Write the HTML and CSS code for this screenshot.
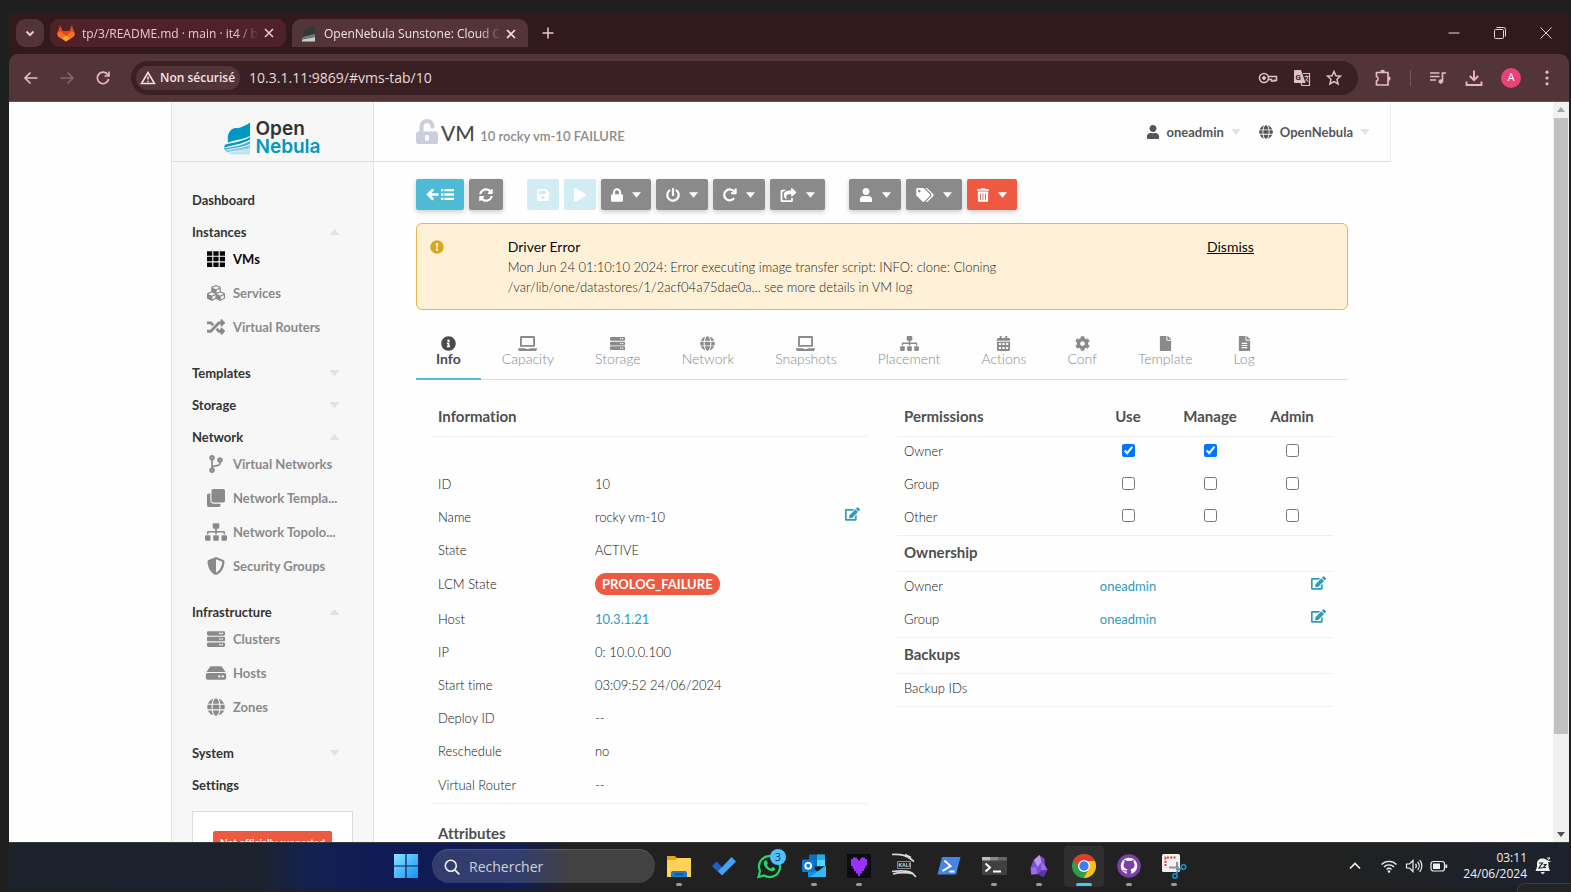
FILE: index.html
```html
<!DOCTYPE html>
<html lang="en">
<head>
<meta charset="utf-8">
<title>OpenNebula Sunstone: Cloud Operations Center</title>
<link rel="stylesheet" href="styles.css">
</head>
<body>
<svg class="sprite" aria-hidden="true">
  <symbol id="caret-down" viewBox="0 0 10 6"><path d="M0 0h10L5 6z"/></symbol>
  <symbol id="caret-up" viewBox="0 0 10 6"><path d="M0 6h10L5 0z"/></symbol>
  <symbol id="th" viewBox="0 0 512 512"><path d="M0 32h149v128H0zM181 32h149v128H181zM363 32h149v128H363zM0 192h149v128H0zM181 192h149v128H181zM363 192h149v128H363zM0 352h149v128H0zM181 352h149v128H181zM363 352h149v128H363z"/></symbol>
  <symbol id="cubes" viewBox="0 0 512 512"><path d="M488.6 250.2L392 214V105.5c0-15-9.3-28.4-23.4-33.7l-100-37.5c-8.1-3.1-17.1-3.1-25.3 0l-100 37.5c-14.1 5.3-23.4 18.7-23.4 33.7V214l-96.6 36.2C9.3 255.5 0 268.9 0 283.9V394c0 13.6 7.7 26.1 19.9 32.2l100 50c10.1 5.1 22.1 5.1 32.2 0l103.9-52 103.9 52c10.1 5.1 22.1 5.1 32.2 0l100-50c12.2-6.1 19.9-18.6 19.9-32.2V283.9c0-15-9.3-28.4-23.4-33.7zM358 214.8l-85 31.9v-68.2l85-37v73.3zM154 104.1l102-38.2 102 38.2v.6l-102 41.4-102-41.4v-.6zm84 291.1l-85 42.5v-79.1l85-38.8v75.4zm0-112l-102 41.4-102-41.4v-.6l102-38.2 102 38.2v.6zm240 112l-85 42.5v-79.1l85-38.8v75.4zm0-112l-102 41.4-102-41.4v-.6l102-38.2 102 38.2v.6z"/></symbol>
  <symbol id="random" viewBox="0 0 512 512"><path d="M504.971 359.029c9.373 9.373 9.373 24.569 0 33.941l-80 79.984c-15.01 15.01-40.971 4.49-40.971-16.971V416h-58.785a12.004 12.004 0 0 1-8.773-3.812l-70.556-75.596 53.333-57.143L352 336h32v-39.981c0-21.438 25.943-31.998 40.971-16.971l80 79.981zM12 176h84l52.781 56.551 53.333-57.143-70.556-75.596A11.999 11.999 0 0 0 122.785 96H12c-6.627 0-12 5.373-12 12v56c0 6.627 5.373 12 12 12zm372 0v39.984c0 21.46 25.961 31.98 40.971 16.971l80-79.984c9.373-9.373 9.373-24.569 0-33.941l-80-79.981C409.943 24.021 384 34.582 384 56.019V96h-58.785a12.004 12.004 0 0 0-8.773 3.812L96 336H12c-6.627 0-12 5.373-12 12v56c0 6.627 5.373 12 12 12h110.785c3.326 0 6.503-1.381 8.773-3.812L352 176h32z"/></symbol>
  <symbol id="branch" viewBox="0 0 384 512"><path d="M384 144c0-44.2-35.8-80-80-80s-80 35.8-80 80c0 36.4 24.3 67.1 57.5 76.8-.6 16.1-4.2 28.5-11 36.9-15.4 19.2-49.3 22.4-85.2 25.7-28.2 2.6-57.4 5.4-81.3 16.9v-144c32.5-10.2 56-40.5 56-76.3 0-44.2-35.8-80-80-80S0 35.8 0 80c0 35.8 23.5 66.1 56 76.3v199.3C23.5 365.9 0 396.2 0 432c0 44.2 35.8 80 80 80s80-35.8 80-80c0-34-21.2-63.1-51.2-74.6 3.1-5.2 7.8-9.8 14.9-13.4 16.2-8.2 40.4-10.4 66.1-12.8 42.2-3.9 90-8.4 118.2-43.4 14-17.4 21.1-39.8 21.6-67.9 31.6-10.8 54.4-40.7 54.4-75.9zM80 64c8.8 0 16 7.2 16 16s-7.2 16-16 16-16-7.2-16-16 7.2-16 16-16zm0 384c-8.8 0-16-7.2-16-16s7.2-16 16-16 16 7.2 16 16-7.2 16-16 16zm224-320c8.8 0 16 7.2 16 16s-7.2 16-16 16-16-7.2-16-16 7.2-16 16-16z"/></symbol>
  <symbol id="clone" viewBox="0 0 512 512"><path d="M464 0c26.51 0 48 21.49 48 48v288c0 26.51-21.49 48-48 48H176c-26.51 0-48-21.49-48-48V48c0-26.51 21.49-48 48-48h288M176 416c-44.112 0-80-35.888-80-80V128H48c-26.51 0-48 21.49-48 48v288c0 26.51 21.49 48 48 48h288c26.51 0 48-21.49 48-48v-48H176z"/></symbol>
  <symbol id="sitemap" viewBox="0 0 640 512"><path d="M128 352H32c-17.67 0-32 14.33-32 32v96c0 17.67 14.33 32 32 32h96c17.67 0 32-14.33 32-32v-96c0-17.67-14.33-32-32-32zm-24-80h192v48h48v-48h192v48h48v-57.59c0-21.17-17.23-38.41-38.41-38.41H344v-64h40c17.67 0 32-14.33 32-32V32c0-17.67-14.33-32-32-32H256c-17.67 0-32 14.33-32 32v96c0 17.67 14.33 32 32 32h40v64H94.41C73.23 224 56 241.23 56 262.41V320h48v-48zm264 80h-96c-17.67 0-32 14.33-32 32v96c0 17.67 14.33 32 32 32h96c17.67 0 32-14.33 32-32v-96c0-17.67-14.33-32-32-32zm240 0h-96c-17.67 0-32 14.33-32 32v96c0 17.67 14.33 32 32 32h96c17.67 0 32-14.33 32-32v-96c0-17.67-14.33-32-32-32z"/></symbol>
  <symbol id="shield" viewBox="0 0 512 512"><path d="M466.5 83.7l-192-80a48.15 48.15 0 0 0-36.9 0l-192 80C27.7 91.1 16 108.6 16 128c0 198.5 114.5 335.7 221.5 380.3 11.8 4.9 25.1 4.9 36.9 0C360.1 472.6 496 349.3 496 128c0-19.4-11.7-36.9-29.5-44.3zM256.1 446.3l-.1-381 175.9 73.3c-3.3 151.4-82.1 261.1-175.8 307.7z"/></symbol>
  <symbol id="server" viewBox="0 0 512 512"><path fill-rule="evenodd" d="M32 32h448a32 32 0 0 1 32 32v64a32 32 0 0 1-32 32H32a32 32 0 0 1-32-32V64a32 32 0 0 1 32-32zm376 64a24 24 0 1 0 48 0 24 24 0 1 0-48 0zm-64 0a24 24 0 1 0 48 0 24 24 0 1 0-48 0zM32 192h448a32 32 0 0 1 32 32v64a32 32 0 0 1-32 32H32a32 32 0 0 1-32-32v-64a32 32 0 0 1 32-32zm376 64a24 24 0 1 0 48 0 24 24 0 1 0-48 0zm-64 0a24 24 0 1 0 48 0 24 24 0 1 0-48 0zM32 352h448a32 32 0 0 1 32 32v64a32 32 0 0 1-32 32H32a32 32 0 0 1-32-32v-64a32 32 0 0 1 32-32zm376 64a24 24 0 1 0 48 0 24 24 0 1 0-48 0zm-64 0a24 24 0 1 0 48 0 24 24 0 1 0-48 0z"/></symbol>
  <symbol id="hdd" viewBox="0 0 576 512"><path d="M576 304v96c0 26.51-21.49 48-48 48H48c-26.51 0-48-21.49-48-48v-96c0-26.51 21.49-48 48-48h480c26.51 0 48 21.49 48 48zm-48-80a79.557 79.557 0 0 1 30.777 6.165L462.25 85.374A48.003 48.003 0 0 0 422.311 64H153.689a48 48 0 0 0-39.938 21.374L17.223 230.165A79.557 79.557 0 0 1 48 224h480zm-48 96c-17.673 0-32 14.327-32 32s14.327 32 32 32 32-14.327 32-32-14.327-32-32-32zm-96 0c-17.673 0-32 14.327-32 32s14.327 32 32 32 32-14.327 32-32-14.327-32-32-32z"/></symbol>
  <symbol id="globe" viewBox="0 0 496 512"><path d="M336.5 160C322 70.7 287.8 8 248 8s-74 62.7-88.5 152h177zM152 256c0 22.2 1.2 43.5 3.3 64h185.3c2.1-20.5 3.3-41.8 3.3-64s-1.2-43.5-3.3-64H155.3c-2.1 20.5-3.3 41.8-3.3 64zm324.7-96c-28.6-67.9-86.5-120.4-158-141.6 24.4 33.8 41.2 84.7 50 141.6h108zM177.2 18.4C105.8 39.6 47.8 92.1 19.3 160h108c8.7-56.9 25.5-107.8 49.9-141.6zM487.4 192H372.7c2.1 21 3.3 42.5 3.3 64s-1.2 43-3.3 64h114.6c5.5-20.5 8.6-41.8 8.6-64s-3.1-43.5-8.5-64zM120 256c0-21.5 1.2-43 3.3-64H8.6C3.2 212.5 0 233.8 0 256s3.2 43.5 8.6 64h114.6c-2-21-3.2-42.5-3.2-64zm39.5 96c14.5 89.3 48.7 152 88.5 152s74-62.7 88.5-152h-177zm159.3 141.6c71.4-21.2 129.4-73.7 158-141.6h-108c-8.8 56.9-25.6 107.8-50 141.6zM19.3 352c28.6 67.9 86.5 120.4 158 141.6-24.4-33.8-41.2-84.7-50-141.6h-108z"/></symbol>
  <symbol id="user" viewBox="0 0 448 512"><path d="M224 256c70.7 0 128-57.3 128-128S294.7 0 224 0 96 57.3 96 128s57.3 128 128 128zm89.6 32h-16.7c-22.2 10.2-46.9 16-72.9 16s-50.6-5.8-72.9-16h-16.7C60.2 288 0 348.2 0 422.4V464c0 26.5 21.5 48 48 48h352c26.5 0 48-21.5 48-48v-41.6c0-74.2-60.2-134.4-134.4-134.4z"/></symbol>
  <symbol id="unlock" viewBox="0 0 448 512"><path d="M400 256H152V152.9c0-39.6 31.7-72.5 71.3-72.9 40-.4 72.7 32.1 72.7 72v16c0 13.3 10.7 24 24 24h32c13.3 0 24-10.7 24-24v-16C376 68 307.5-.3 223.5 0 139.5.3 72 69.5 72 153.5V256H48c-26.5 0-48 21.5-48 48v160c0 26.5 21.5 48 48 48h352c26.5 0 48-21.5 48-48V304c0-26.5-21.5-48-48-48zM264 408c0 22.1-17.9 40-40 40s-40-17.9-40-40v-48c0-22.1 17.9-40 40-40s40 17.9 40 40v48z"/></symbol>
  <symbol id="lock" viewBox="0 0 448 512"><path d="M400 224h-24v-72C376 68.2 307.8 0 224 0S72 68.2 72 152v72H48c-26.5 0-48 21.5-48 48v192c0 26.5 21.5 48 48 48h352c26.5 0 48-21.5 48-48V272c0-26.5-21.5-48-48-48zm-104 0H152v-72c0-39.7 32.3-72 72-72s72 32.3 72 72v72z"/></symbol>
  <symbol id="back-list" viewBox="0 0 960 512"><path d="M430 210v92H185l95 96-64 64L10 256 216 50l64 64-95 96zM512 64h84v84h-84zM512 214h84v84h-84zM512 364h84v84h-84zM628 66h332v80H628zM628 216h332v80H628zM628 366h332v80H628z"/></symbol>
  <symbol id="sync" viewBox="0 0 512 512"><path d="M370.72 133.28C339.458 104.008 298.888 87.962 255.848 88c-77.458.068-144.328 53.178-162.791 126.85-1.344 5.363-6.122 9.15-11.651 9.15H24.103c-7.498 0-13.194-6.807-11.807-14.176C33.933 94.924 134.813 8 256 8c66.448 0 126.791 26.136 171.315 68.685L463.03 40.97C478.149 25.851 504 36.559 504 57.941V192c0 13.255-10.745 24-24 24H345.941c-21.382 0-32.09-25.851-16.971-40.971l41.75-41.749zM32 296h134.059c21.382 0 32.09 25.851 16.971 40.971l-41.75 41.75c31.262 29.273 71.835 45.319 114.876 45.28 77.418-.07 144.315-53.144 162.787-126.849 1.344-5.363 6.122-9.15 11.651-9.15h57.304c7.498 0 13.194 6.807 11.807 14.176C478.067 417.076 377.187 504 256 504c-66.448 0-126.791-26.136-171.315-68.685L48.97 471.03C33.851 486.149 8 475.441 8 454.059V320c0-13.255 10.745-24 24-24z"/></symbol>
  <symbol id="save" viewBox="0 0 448 512"><path d="M433.941 129.941l-83.882-83.882A48 48 0 0 0 316.118 32H48C21.49 32 0 53.49 0 80v352c0 26.51 21.49 48 48 48h352c26.51 0 48-21.49 48-48V163.882a48 48 0 0 0-14.059-33.941zM224 416c-35.346 0-64-28.654-64-64 0-35.346 28.654-64 64-64s64 28.654 64 64c0 35.346-28.654 64-64 64zm96-304.52V212c0 6.627-5.373 12-12 12H76c-6.627 0-12-5.373-12-12V108c0-6.627 5.373-12 12-12h228.52c3.183 0 6.235 1.264 8.485 3.515l3.48 3.48A11.996 11.996 0 0 1 320 111.48z"/></symbol>
  <symbol id="play" viewBox="0 0 448 512"><path d="M424.4 214.7L72.4 6.6C43.8-10.3 0 6.1 0 47.9V464c0 37.5 40.7 60.1 72.4 41.3l352-208c31.4-18.5 31.5-64.1 0-82.6z"/></symbol>
  <symbol id="power" viewBox="0 0 512 512"><path d="M400 54.1c63 45 104 118.6 104 201.9 0 136.8-110.8 247.7-247.5 248C120 504.3 8.2 393 8 256.4 7.9 173.1 48.9 99.3 111.8 54.2c11.7-8.3 28-4.8 35 7.7L162.6 90c5.9 10.5 3.1 23.8-6.6 31-41.5 30.8-68 79.6-68 134.9-.1 92.3 74.5 168.1 168 168.1 91.6 0 168.6-74.2 168-169.1-.3-51.8-24.7-101.8-68.1-134-9.7-7.2-12.4-20.5-6.5-30.9l15.8-28.1c7-12.4 23.2-16.1 34.8-7.8zM296 264V24c0-13.3-10.7-24-24-24h-32c-13.3 0-24 10.7-24 24v240c0 13.3 10.7 24 24 24h32c13.3 0 24-10.7 24-24z"/></symbol>
  <symbol id="redo" viewBox="0 0 512 512"><path fill="none" stroke="currentColor" stroke-width="80" d="M406 370A200 200 0 1 1 418 150"/><path d="M500 20v192a14 14 0 0 1-14 14H294v-74h130V20z"/></symbol>
  <symbol id="share" viewBox="0 0 576 512"><path d="M568 177L424 313c-15 14-40 3-40-18v-79c-144 2-205 36-164 168 5 15-13 26-26 17-40-29-76-84-76-140 0-138 115-168 266-169V24c0-21 25-32 40-18l144 136c10 10 10 26 0 35zM384 379v69H64V128h50c5 0 9-2 12-5 16-17 34-30 54-40 9-6 5-19-4-19H48C22 64 0 86 0 112v352c0 26 22 48 48 48h352c26 0 48-22 48-48v-88c0-8-8-13-15-10-11 3-22 4-33 2-9-1-16 3-16 11z"/></symbol>
  <symbol id="tags" viewBox="0 0 640 512"><path d="M497.941 225.941L286.059 14.059A48 48 0 0 0 252.118 0H48C21.49 0 0 21.49 0 48v204.118a48 48 0 0 0 14.059 33.941l211.882 211.882c18.744 18.745 49.136 18.746 67.882 0l204.118-204.118c18.745-18.745 18.745-49.137 0-67.882zM112 160c-26.51 0-48-21.49-48-48s21.49-48 48-48 48 21.49 48 48-21.49 48-48 48zm513.941 133.823L421.823 497.941c-18.745 18.745-49.137 18.745-67.882 0l-.36-.36L527.64 323.522c16.999-16.999 26.362-39.6 26.362-63.64s-9.362-46.641-26.362-63.64L331.397 0h48.721a48 48 0 0 1 33.941 14.059l211.882 211.882c18.745 18.745 18.745 49.137 0 67.882z"/></symbol>
  <symbol id="trash" viewBox="0 0 448 512"><path d="M32 464a48 48 0 0 0 48 48h288a48 48 0 0 0 48-48V128H32zm272-256a16 16 0 0 1 32 0v224a16 16 0 0 1-32 0zm-96 0a16 16 0 0 1 32 0v224a16 16 0 0 1-32 0zm-96 0a16 16 0 0 1 32 0v224a16 16 0 0 1-32 0zM432 32H312l-9.4-18.7A24 24 0 0 0 281.1 0H166.8a23.72 23.72 0 0 0-21.4 13.3L136 32H16A16 16 0 0 0 0 48v32a16 16 0 0 0 16 16h416a16 16 0 0 0 16-16V48a16 16 0 0 0-16-16z"/></symbol>
  <symbol id="warn" viewBox="0 0 512 512"><path fill-rule="evenodd" d="M256 8a248 248 0 1 1 0 496 248 248 0 1 1 0-496zm0 298a46 46 0 1 0 0 92 46 46 0 1 0 0-92zm-44-186l8 148c0 6 6 12 12 12h48c6 0 12-6 12-12l8-148c0-7-5-12-12-12h-64c-7 0-12 5-12 12z"/></symbol>
  <symbol id="info" viewBox="0 0 512 512"><path d="M256 8C119.043 8 8 119.083 8 256c0 136.997 111.043 248 248 248s248-111.003 248-248C504 119.083 392.957 8 256 8zm0 110c23.196 0 42 18.804 42 42s-18.804 42-42 42-42-18.804-42-42 18.804-42 42-42zm56 254c0 6.627-5.373 12-12 12h-88c-6.627 0-12-5.373-12-12v-24c0-6.627 5.373-12 12-12h12v-64h-12c-6.627 0-12-5.373-12-12v-24c0-6.627 5.373-12 12-12h64c6.627 0 12 5.373 12 12v100h12c6.627 0 12 5.373 12 12v24z"/></symbol>
  <symbol id="laptop" viewBox="0 0 640 512"><path fill-rule="evenodd" d="M112 0h416c26 0 48 22 48 48v320H64V48c0-26 22-48 48-48zm16 64v240h384V64zM0 416h250c2 20 14 30 32 30h76c18 0 30-10 32-30h250v32c0 35-29 64-64 64H64c-35 0-64-29-64-64z"/></symbol>
  <symbol id="calendar" viewBox="0 0 448 512"><path fill-rule="evenodd" d="M96 0h64v64h128V0h64v64h48c26 0 48 22 48 48v48H0v-48c0-26 22-48 48-48h48zM0 192h448v272c0 26-22 48-48 48H48c-26 0-48-22-48-48zm64 50v66h76v-66zm122 0v66h76v-66zm122 0v66h76v-66zM64 376v66h76v-66zm122 0v66h76v-66zm122 0v66h76v-66z"/></symbol>
  <symbol id="cog" viewBox="0 0 512 512"><path d="M487.4 315.7l-42.6-24.6c4.3-23.2 4.3-47 0-70.2l42.6-24.6c4.9-2.8 7.1-8.6 5.5-14-11.1-35.6-30-67.8-54.7-94.6-3.8-4.1-10-5.1-14.8-2.3L380.8 110c-17.9-15.4-38.5-27.3-60.8-35.1V25.8c0-5.6-3.9-10.5-9.4-11.7-36.7-8.2-74.3-7.8-109.2 0-5.5 1.2-9.4 6.1-9.4 11.7V75c-22.2 7.9-42.8 19.8-60.8 35.1L88.7 85.5c-4.9-2.8-11-1.9-14.8 2.3-24.7 26.7-43.6 58.9-54.7 94.6-1.7 5.4.6 11.2 5.5 14L67.3 221c-4.3 23.2-4.3 47 0 70.2l-42.6 24.6c-4.9 2.8-7.1 8.6-5.5 14 11.1 35.6 30 67.8 54.7 94.6 3.8 4.1 10 5.1 14.8 2.3l42.6-24.6c17.9 15.4 38.5 27.3 60.8 35.1v49.2c0 5.6 3.9 10.5 9.4 11.7 36.7 8.2 74.3 7.8 109.2 0 5.5-1.2 9.4-6.1 9.4-11.7v-49.2c22.2-7.9 42.8-19.8 60.8-35.1l42.6 24.6c4.9 2.8 11 1.9 14.8-2.3 24.7-26.7 43.6-58.9 54.7-94.6 1.5-5.5-.7-11.3-5.6-14.1zM256 336c-44.1 0-80-35.9-80-80s35.9-80 80-80 80 35.9 80 80-35.9 80-80 80z"/></symbol>
  <symbol id="file" viewBox="0 0 384 512"><path d="M224 136V0H24C10.7 0 0 10.7 0 24v464c0 13.3 10.7 24 24 24h336c13.3 0 24-10.7 24-24V160H248c-13.2 0-24-10.8-24-24zm160-14.1v6.1H256V0h6.1c6.4 0 12.5 2.5 17 7l97.9 98c4.5 4.5 7 10.6 7 16.9z"/></symbol>
  <symbol id="file-text" viewBox="0 0 384 512"><path fill-rule="evenodd" d="M224 136V0H24C10.7 0 0 10.7 0 24v464c0 13.3 10.7 24 24 24h336c13.3 0 24-10.7 24-24V160H248c-13.2 0-24-10.8-24-24zM96 232h192v40H96zm0 72h192v40H96zm0 72h192v40H96zM384 122v6H256V0h6c6 0 12 2 17 7l98 98c5 5 7 11 7 17z"/></symbol>
  <symbol id="edit" viewBox="0 0 576 512"><path d="M402.6 83.2l90.2 90.2c3.8 3.8 3.8 10 0 13.8L274.4 405.6l-92.8 10.3c-12.4 1.4-22.9-9.1-21.5-21.5l10.3-92.8L388.8 83.2c3.8-3.8 10-3.8 13.8 0zm162-22.9l-48.8-48.8c-15.2-15.2-39.9-15.2-55.2 0l-35.4 35.4c-3.8 3.8-3.8 10 0 13.8l90.2 90.2c3.8 3.8 10 3.8 13.8 0l35.4-35.4c15.2-15.3 15.2-40 0-55.2zM384 346.2V448H64V128h229.8c3.2 0 6.2-1.3 8.5-3.5l40-40c7.6-7.6 2.2-20.5-8.5-20.5H48C21.5 64 0 85.5 0 112v352c0 26.5 21.5 48 48 48h352c26.5 0 48-21.5 48-48V306.2c0-10.7-12.9-16-20.5-8.5l-40 40c-2.2 2.3-3.5 5.3-3.5 8.5z"/></symbol>
</svg>

<div class="browser">
  <div class="tabstrip">
    <button class="tab-search" aria-label="Search tabs"><svg viewBox="0 0 10 10" class="i10 line"><path d="M1.500 3.500L5 7l3.500-3.500" stroke-width="2"/></svg></button>
    <div class="btab">
      <svg class="i18" viewBox="0 0 18 18"><path fill="#e24329" d="M3.200 1L5.500 7h7L14.800 1l2.700 7.500L9 17 .5 8.500z"/><path fill="#fc6d26" d="M.5 8.500c-.8 2 0 3.700 1.500 4.700L9 17.500l7-4.300c1.500-1 2.300-2.700 1.500-4.700l-3-1.300L9 12 3.500 7.200z"/><path fill="#fca326" d="M5 14.300L9 11.500l4 2.800-4 3.200z"/></svg>
      <span class="btab-title">tp/3/README.md · main · it4 / b</span>
      <button class="close" aria-label="Close tab"><svg viewBox="0 0 10 10" class="i10 line"><path d="M1 1l8 8M9 1L1 9" stroke-width="1.600"/></svg></button>
    </div>
    <div class="btab active">
      <svg class="i18 fav" viewBox="0 0 18 18"><path fill="#2e3a38" d="M4 5l11-4v8L3 12z"/><path fill="#77807e" d="M3 12l12-3v2.500L2 14z"/><path fill="#c9cfcd" d="M2 14.500l13-2.500v4.500H2z"/></svg>
      <span class="btab-title">OpenNebula Sunstone: Cloud C</span>
      <button class="close" aria-label="Close tab"><svg viewBox="0 0 10 10" class="i10 line"><path d="M1 1l8 8M9 1L1 9" stroke-width="1.600"/></svg></button>
    </div>
    <button class="newtab" aria-label="New tab"><svg viewBox="0 0 12 12" class="i12 line"><path d="M6 .5v11M.5 6h11" stroke-width="1.500"/></svg></button>
    <div class="winctl">
      <button aria-label="Minimize"><svg viewBox="0 0 12 12" class="i12 line"><path d="M.5 6h11"/></svg></button>
      <button aria-label="Restore"><svg viewBox="0 0 12 12" class="i12 line"><rect x=".5" y="2.500" width="9" height="9" rx="1"/><path d="M2.500 .5H9.500a2 2 0 0 1 2 2v7"/></svg></button>
      <button aria-label="Close"><svg viewBox="0 0 12 12" class="i12 line"><path d="M.5 .5l11 11M11.500 .5l-11 11"/></svg></button>
    </div>
  </div>

  <div class="toolbar">
    <button aria-label="Back"><svg viewBox="0 0 16 16" class="i16 line"><path d="M14.500 8H2.500M7.500 2.500L2 8l5.500 5.500" stroke-width="1.700"/></svg></button>
    <button aria-label="Forward" class="dim"><svg viewBox="0 0 16 16" class="i16 line"><path d="M1.500 8h12M8.500 2.500L14 8l-5.500 5.500" stroke-width="1.700"/></svg></button>
    <button aria-label="Reload"><svg viewBox="0 0 16 16" class="i16 line"><path d="M12.800 4.800A5.700 5.700 0 1 0 13.600 9M14 1.500V6H9.500" stroke-width="1.700"/></svg></button>
    <div class="omnibox">
      <button class="chip"><svg viewBox="0 0 16 16" class="i16 line"><path d="M8 2.500L1.500 13.500h13z" stroke-width="1.500"/><path d="M8 6.500v3M8 10.800v1.400" stroke-width="1.500"/></svg>Non sécurisé</button>
      <input class="url" aria-label="Address" value="10.3.1.11:9869/#vms-tab/10">
      <button aria-label="Passwords"><svg viewBox="0 0 20 16" class="i20 line"><circle cx="6" cy="8" r="4.500" stroke-width="1.600"/><circle cx="6" cy="8" r="1.500" fill="currentColor"/><path d="M10 6.500h8.500v4h-2M10 9.500h3.500v1.500h3V9.500" stroke-width="1.500"/></svg></button>
      <button aria-label="Translate"><svg viewBox="0 0 18 18" class="i18"><path fill="#dcc3c6" d="M2 1h6l1.300 3.500L12.500 14H2a1 1 0 0 1-1-1V2a1 1 0 0 1 1-1z"/><path fill="none" stroke="#dcc3c6" stroke-width="1.200" d="M10 4.500h6.500v12H9L8 14"/><text x="2.500" y="10.500" class="glyph">G</text><path fill="none" stroke="#dcc3c6" d="M11.500 7.500h4M13.500 6.500v1M15 7.500c-.5 2.500-2 4-3 5M12.500 9.500l3 3.500"/></svg></button>
      <button aria-label="Bookmark"><svg viewBox="0 0 16 16" class="i16 line"><path d="M8 1.500l1.900 4.300 4.600.4-3.500 3.100 1.100 4.600L8 11.500l-4.100 2.400L5 9.300 1.500 6.200l4.600-.4z" stroke-width="1.500"/></svg></button>
    </div>
    <div class="actions">
      <button aria-label="Extensions"><svg viewBox="0 0 18 18" class="i18 line"><path d="M2.500 3.500h11.500v12.500H2.500v-4a2.400 2.400 0 0 0 0-4.500z" stroke-width="1.700"/><path d="M7 3.200a1.600 1.600 0 0 1 3.200 0M14.200 8a1.600 1.600 0 0 1 0 3.200" stroke-width="1.700" fill="currentColor"/></svg></button>
      <span class="sep"></span>
      <button aria-label="Media"><svg viewBox="0 0 18 18" class="i18 line"><path d="M1 4h9.500M1 7.500h9.500M1 11h6" stroke-width="1.700"/><path d="M13.500 12.500V4H17" stroke-width="1.700"/><circle cx="11.800" cy="12.500" r="1.800" fill="currentColor"/></svg></button>
      <button aria-label="Downloads"><svg viewBox="0 0 18 18" class="i18 line"><path d="M9 1.500v9.500M4.800 7L9 11.200 13.200 7M1.500 12.500v3.500h15v-3.500" stroke-width="1.900"/></svg></button>
      <button class="avatar" aria-label="Profile">A</button>
      <button aria-label="Menu"><svg viewBox="0 0 16 16" class="i16"><circle cx="8" cy="2.200" r="1.600"/><circle cx="8" cy="8" r="1.600"/><circle cx="8" cy="13.800" r="1.600"/></svg></button>
    </div>
  </div>

  <div class="viewport">
    <div class="scroller">
      <div class="app">
        <aside class="sidebar">
          <div class="logo">
            <svg viewBox="0 0 28 34" class="logo-mark"><path fill="#0098c3" d="M4 19C3 11 9 5 14 7c4-1 9-3 13-6v14C19 19 11 19 4 22z"/><path fill="#0098c3" d="M1 24c7-2 18-3 26-8v2.500C18 24 8 24 0 27z"/><path fill="#3bb0d3" d="M0 27.500C9 26 19 25 27 20v3c-8 4-18 4-26 6.500z"/><path fill="#7fcce3" d="M1 30c9-2 18-2 26-6v3.500c-8 2.500-17 2-24 4.500z"/><path fill="#c0e5f1" d="M4 32.500c8-2 15-2 23-4.500V34H7z"/></svg>
            <div class="logo-text"><span>Open</span><span class="blue">Nebula</span></div>
          </div>
          <nav class="nav">
            <div class="group"><a class="section" href="#dashboard">Dashboard</a></div>
            <div class="group open">
              <button class="section">Instances<svg class="caret"><use href="#caret-up"/></svg></button>
              <a class="sub current" href="#vms"><svg class="ni"><use href="#th"/></svg><span>VMs</span></a>
              <a class="sub" href="#services"><svg class="ni"><use href="#cubes"/></svg><span>Services</span></a>
              <a class="sub" href="#vrouters"><svg class="ni"><use href="#random"/></svg><span>Virtual Routers</span></a>
            </div>
            <div class="group"><button class="section">Templates<svg class="caret"><use href="#caret-down"/></svg></button></div>
            <div class="group"><button class="section">Storage<svg class="caret"><use href="#caret-down"/></svg></button></div>
            <div class="group open">
              <button class="section">Network<svg class="caret"><use href="#caret-up"/></svg></button>
              <a class="sub" href="#vnets"><svg class="ni"><use href="#branch"/></svg><span>Virtual Networks</span></a>
              <a class="sub" href="#vntemplates"><svg class="ni"><use href="#clone"/></svg><span>Network Templa...</span></a>
              <a class="sub" href="#topology"><svg class="ni wide"><use href="#sitemap"/></svg><span>Network Topolo...</span></a>
              <a class="sub" href="#secgroups"><svg class="ni"><use href="#shield"/></svg><span>Security Groups</span></a>
            </div>
            <div class="group open">
              <button class="section">Infrastructure<svg class="caret"><use href="#caret-up"/></svg></button>
              <a class="sub" href="#clusters"><svg class="ni"><use href="#server"/></svg><span>Clusters</span></a>
              <a class="sub" href="#hosts"><svg class="ni wide"><use href="#hdd"/></svg><span>Hosts</span></a>
              <a class="sub" href="#zones"><svg class="ni"><use href="#globe"/></svg><span>Zones</span></a>
            </div>
            <div class="group"><button class="section">System<svg class="caret"><use href="#caret-down"/></svg></button></div>
            <div class="group"><a class="section" href="#settings">Settings</a></div>
          </nav>
          <div class="support"><span class="support-tag">Not officially supported</span></div>
        </aside>

        <main class="main">
          <header class="head">
            <svg class="head-lock"><use href="#unlock"/></svg>
            <h1>VM <small>10 rocky vm-10 FAILURE</small></h1>
            <div class="head-menu">
              <button><svg class="i14"><use href="#user"/></svg>oneadmin<svg class="caret"><use href="#caret-down"/></svg></button>
              <button><svg class="i14"><use href="#globe"/></svg>OpenNebula<svg class="caret"><use href="#caret-down"/></svg></button>
            </div>
          </header>

          <div class="content">
            <div class="actionbar">
              <div class="bgroup">
                <button class="btn cyan" aria-label="Back to list"><svg class="ic-list"><use href="#back-list"/></svg></button>
                <button class="btn" aria-label="Refresh"><svg class="i14"><use href="#sync"/></svg></button>
              </div>
              <div class="bgroup">
                <button class="btn pale" disabled aria-label="Save"><svg class="i14 n"><use href="#save"/></svg></button>
                <button class="btn pale" disabled aria-label="Play"><svg class="i14 n"><use href="#play"/></svg></button>
                <button class="btn" aria-label="Lock"><svg class="i14 n"><use href="#lock"/></svg><svg class="bc"><use href="#caret-down"/></svg></button>
                <button class="btn" aria-label="Power"><svg class="i14"><use href="#power"/></svg><svg class="bc"><use href="#caret-down"/></svg></button>
                <button class="btn" aria-label="Reboot"><svg class="i14"><use href="#redo"/></svg><svg class="bc"><use href="#caret-down"/></svg></button>
                <button class="btn" aria-label="Migrate"><svg class="i14 w"><use href="#share"/></svg><svg class="bc"><use href="#caret-down"/></svg></button>
              </div>
              <div class="bgroup">
                <button class="btn" aria-label="Owner"><svg class="i14"><use href="#user"/></svg><svg class="bc"><use href="#caret-down"/></svg></button>
                <button class="btn" aria-label="Labels"><svg class="i14 ww"><use href="#tags"/></svg><svg class="bc"><use href="#caret-down"/></svg></button>
                <button class="btn red" aria-label="Terminate"><svg class="i14 n"><use href="#trash"/></svg><svg class="bc"><use href="#caret-down"/></svg></button>
              </div>
            </div>

            <div class="alert" role="alert">
              <svg class="i14 gold"><use href="#warn"/></svg>
              <p><b>Driver Error</b><br>Mon Jun 24 01:10:10 2024: Error executing image transfer script: INFO: clone: Cloning<br>/var/lib/one/datastores/1/2acf04a75dae0a... see more details in VM log</p>
              <a href="#dismiss">Dismiss</a>
            </div>

            <nav class="tabs">
              <a class="on" href="#info"><svg class="ti"><use href="#info"/></svg>Info</a>
              <a href="#capacity"><svg class="ti"><use href="#laptop"/></svg>Capacity</a>
              <a href="#storage"><svg class="ti"><use href="#server"/></svg>Storage</a>
              <a href="#network"><svg class="ti"><use href="#globe"/></svg>Network</a>
              <a href="#snapshots"><svg class="ti"><use href="#laptop"/></svg>Snapshots</a>
              <a href="#placement"><svg class="ti"><use href="#sitemap"/></svg>Placement</a>
              <a href="#actions"><svg class="ti"><use href="#calendar"/></svg>Actions</a>
              <a href="#conf"><svg class="ti"><use href="#cog"/></svg>Conf</a>
              <a href="#template"><svg class="ti"><use href="#file"/></svg>Template</a>
              <a href="#log"><svg class="ti"><use href="#file-text"/></svg>Log</a>
            </nav>

            <div class="panels">
              <div>
                <table class="info">
                  <colgroup><col class="col-key"><col><col class="col-edit"></colgroup>
                  <thead><tr><th colspan="3">Information</th></tr></thead>
                  <tbody>
                    <tr class="blank"><td colspan="3"></td></tr>
                    <tr><td>ID</td><td>10</td><td></td></tr>
                    <tr><td>Name</td><td>rocky vm-10</td><td class="e"><button aria-label="Edit name"><svg class="ed"><use href="#edit"/></svg></button></td></tr>
                    <tr><td>State</td><td>ACTIVE</td><td></td></tr>
                    <tr class="tall"><td>LCM State</td><td><span class="pill">PROLOG_FAILURE</span></td><td></td></tr>
                    <tr><td>Host</td><td><a href="#host">10.3.1.21</a></td><td></td></tr>
                    <tr><td>IP</td><td>0: 10.0.0.100</td><td></td></tr>
                    <tr><td>Start time</td><td>03:09:52 24/06/2024</td><td></td></tr>
                    <tr><td>Deploy ID</td><td>--</td><td></td></tr>
                    <tr><td>Reschedule</td><td>no</td><td></td></tr>
                    <tr class="tall"><td>Virtual Router</td><td>--</td><td></td></tr>
                  </tbody>
                </table>
                <table class="info attrs"><thead><tr><th>Attributes</th></tr></thead></table>
              </div>
              <div>
                <table class="perm">
                  <thead><tr><th>Permissions</th><th class="c">Use</th><th class="c">Manage</th><th class="c">Admin</th></tr></thead>
                  <tbody>
                    <tr><td>Owner</td><td class="c"><input type="checkbox" checked aria-label="Owner use"></td><td class="c"><input type="checkbox" checked aria-label="Owner manage"></td><td class="c"><input type="checkbox" aria-label="Owner admin"></td></tr>
                    <tr><td>Group</td><td class="c"><input type="checkbox" aria-label="Group use"></td><td class="c"><input type="checkbox" aria-label="Group manage"></td><td class="c"><input type="checkbox" aria-label="Group admin"></td></tr>
                    <tr><td>Other</td><td class="c"><input type="checkbox" aria-label="Other use"></td><td class="c"><input type="checkbox" aria-label="Other manage"></td><td class="c"><input type="checkbox" aria-label="Other admin"></td></tr>
                  </tbody>
                  <thead class="mid"><tr><th colspan="4">Ownership</th></tr></thead>
                  <tbody>
                    <tr><td>Owner</td><td class="c"><a href="#user">oneadmin</a></td><td></td><td class="e"><button aria-label="Edit owner"><svg class="ed"><use href="#edit"/></svg></button></td></tr>
                    <tr><td>Group</td><td class="c"><a href="#group">oneadmin</a></td><td></td><td class="e"><button aria-label="Edit group"><svg class="ed"><use href="#edit"/></svg></button></td></tr>
                  </tbody>
                  <thead class="mid"><tr><th colspan="4">Backups</th></tr></thead>
                  <tbody><tr><td colspan="4">Backup IDs</td></tr></tbody>
                </table>
              </div>
            </div>
          </div>
        </main>
      </div>
    </div>
    <div class="scrollbar">
      <svg class="arrow up"><use href="#caret-up"/></svg>
      <div class="track"><div class="thumb"></div></div>
      <svg class="arrow"><use href="#caret-down"/></svg>
    </div>
  </div>

  <div class="taskbar">
    <div class="dock">
      <button class="start" aria-label="Start"><svg viewBox="0 0 24 24" class="i24"><defs><linearGradient id="win" x1="0" y1="0" x2="1" y2="1"><stop offset="0" stop-color="#8fe3ff"/><stop offset="1" stop-color="#0a93f5"/></linearGradient></defs><path fill="url(#win)" d="M0 0h11.400v11.400H0zM12.600 0H24v11.400H12.600zM0 12.600h11.400V24H0zM12.600 12.600H24V24H12.600z"/></svg></button>
      <label class="search"><svg viewBox="0 0 16 16" class="i16 line"><circle cx="6.800" cy="6.800" r="5.500" stroke-width="1.600"/><path d="M10.800 10.800l4.500 4.500" stroke-width="1.800"/></svg><input placeholder="Rechercher" aria-label="Rechercher"></label>
      <div class="apps">
        <button class="run" aria-label="Explorer"><svg viewBox="0 0 26 26" class="i26"><path fill="#e8a317" d="M1 3h8l2.500 2.500H25V10H1z"/><path fill="#ffd157" d="M1 7h8l2.500-2H25v19H1z"/><path fill="#1c79c8" d="M5 24v-4a2 2 0 0 1 2-2h12a2 2 0 0 1 2 2v4z"/><path fill="#0b4f8f" d="M9 20.500h8v1.500H9z"/></svg></button>
        <button aria-label="To Do"><svg viewBox="0 0 26 26" class="i26"><path fill="#1f5fc4" d="M1 13l4.500-4.500 6 6-4.500 4.500z"/><path fill="#45a2f2" d="M7 18.500L20.500 4 25 8.500 11 22.500z"/></svg></button>
        <button aria-label="WhatsApp"><svg viewBox="0 0 26 26" class="i26"><path fill="none" stroke="#25d366" stroke-width="2.200" d="M2.500 24l1.500-6A10.500 10.500 0 1 1 8 22.500z"/><path fill="#25d366" d="M8.500 8c1-1.300 2-1 2.500.2l.8 1.800c.2.500-.9 1.500-.8 1.900.8 1.800 2.300 2.900 4 3.500.5.100 1.400-1.500 1.900-1.300l2.200 1.100c.6 2.300-1.700 3.300-3.300 3-4-.8-7.500-4-8-7.200-.1-1.200.2-2.300.7-3z"/></svg><span class="badge">3</span></button>
        <button class="run" aria-label="Outlook"><svg viewBox="0 0 26 26" class="i26"><path fill="#0f6cbd" d="M8 1.500h16v12H8z"/><path fill="#28a8ea" d="M16 1.500h8v6h-8z"/><path fill="#50d9ff" d="M16 7h8v6h-8z"/><path fill="#1490df" d="M7 12.500l9.500 6 8.500-6V24H7z"/><path fill="#35b8f1" d="M25 12.500V24H9z"/><rect x="1" y="6.500" width="12.500" height="12.500" rx="1" fill="#0f78d4"/><circle cx="7.200" cy="12.800" r="2.900" fill="none" stroke="#fff" stroke-width="1.900"/></svg></button>
        <button class="run" aria-label="Heart"><svg viewBox="0 0 26 26" class="i26"><path fill="#0d0b14" d="M1 1h24v24H1z"/><path fill="#9b30ff" d="M5 6h2V4.500h4V6h1v1.500h2V6h1V4.500h4V6h2v7h-1.500v2.500H18V18h-2v2.500h-2V23h-2v-2.500h-2V18H8v-2.500H6.500V13H5z"/></svg></button>
        <button aria-label="Kali"><svg viewBox="0 0 26 26" class="i26"><path fill="none" stroke="#d8d8d8" stroke-width="1.700" d="M1 1.500c7-.5 13 0 18 4l4 3M14 1.500l6 3M1 18.500c9-1 16-1 20 1.500l4 4M2 21c7-2 13-2 21 0"/><path fill="none" stroke="#8a8a8a" d="M6.500 8.500h13v7h-13z"/><text x="7.500" y="14" class="kali">KALI</text></svg></button>
        <button aria-label="PowerShell"><svg viewBox="0 0 26 26" class="i26"><path fill="#4a83e6" d="M6 4h18.500L20 21.500H1.500z"/><path fill="none" stroke="#fff" stroke-width="2" d="M8.500 7.500l6 5.500-8 5M13.500 18.500h5"/></svg></button>
        <button class="run" aria-label="Terminal"><svg viewBox="0 0 26 26" class="i26"><rect x="1" y="4" width="25" height="18" rx="1" fill="#404040"/><path fill="#bdbdbd" d="M1 4h8v3.500H1z"/><path fill="#8a8a8a" d="M9 4h8v3.500H9z"/><path fill="#666" d="M17 4h9v3.500h-9z"/><path fill="none" stroke="#fff" stroke-width="2" d="M4.500 10.500l4.500 4-4.500 4M12 18.500h8"/></svg></button>
        <button class="run" aria-label="Obsidian"><svg viewBox="0 0 26 26" class="i26"><path fill="#7c4fd0" d="M13.500 2l5 4 .5 6 2.500 4.500-4 7.500-6-3-6.500.5L4.500 15l3-8z"/><path fill="#b79bf3" d="M13.500 2L8 7l3.500 7 4-5z"/><path fill="#9a70e8" d="M5 15l5-1 1.500 7-6 .500zM15.500 9l3 3.500 2.500 4-6 1z"/><path fill="#5e32a8" d="M11.500 21l4-3.500 5.500-.5-3.500 7z"/></svg></button>
        <button class="run focus" aria-label="Chrome"><svg viewBox="0 0 26 26" class="i26"><circle cx="13" cy="13" r="12" fill="#2f9e44"/><path fill="#e33b2e" d="M2.600 7A12 12 0 0 1 23.400 7L24 8.500H13l-5 7z"/><path fill="#fbc116" d="M23.900 8A12 12 0 0 1 12.500 25l5.500-9 -.5-8z"/><circle cx="13" cy="13" r="6" fill="#fff"/><circle cx="13" cy="13" r="4.700" fill="#3b7ded"/></svg></button>
        <button class="run" aria-label="GitHub Desktop"><svg viewBox="0 0 26 26" class="i26"><circle cx="13" cy="13" r="11.800" fill="#7b3fa8"/><circle cx="13" cy="13" r="8.300" fill="#fff"/><path fill="#7b3fa8" d="M10.800 21.500v-3c-2.500.6-3-1.200-4-1.600 1.700-.5 2.400 1.300 4 .6.100-.7.400-1 .7-1.300-2.500-.4-4-1.400-4-4.200 0-1 .4-1.900 1-2.500-.2-.7-.2-1.600.1-2.500 1 0 1.900.6 2.400 1a8.500 8.500 0 0 1 4 0c.6-.4 1.500-1 2.500-1 .3.900.3 1.800.1 2.500.6.6 1 1.500 1 2.500 0 2.800-1.600 3.900-4.100 4.200.4.400.7 1 .7 1.900v3.400z"/></svg></button>
        <button class="run" aria-label="Snipping Tool"><svg viewBox="0 0 26 26" class="i26"><rect x="1" y="1" width="18" height="18" rx="1.500" fill="#f2f2f2"/><path fill="none" stroke="#d8402c" stroke-width="2" stroke-dasharray="2 1.300" d="M14.500 4.500H4.500v10"/><path stroke="#8b9299" stroke-width="2" d="M16 9v8M8 14.500h10"/><circle cx="22.500" cy="14" r="2.200" fill="none" stroke="#1c93d8" stroke-width="1.500"/><circle cx="14" cy="23" r="2.200" fill="none" stroke="#1c93d8" stroke-width="1.500"/><path stroke="#1c93d8" stroke-width="1.500" d="M15 21l2-4 3.500-2"/></svg></button>
      </div>
    </div>
    <div class="tray">
      <svg viewBox="0 0 14 14" class="i14 line"><path d="M2 9.500L7 4.500l5 5" stroke-width="1.700"/></svg>
      <svg viewBox="0 0 18 16" class="i18 line wifi"><path d="M1.500 6.500a10.500 10.500 0 0 1 15 0M4 9a7 7 0 0 1 10 0M6.500 11.500a3.600 3.600 0 0 1 5 0" stroke-width="1.400"/><circle cx="9" cy="13.500" r="1.300" fill="currentColor" stroke="none"/></svg>
      <svg viewBox="0 0 18 16" class="i18 line"><path d="M1.500 6v4h3l3.500 3.500V2.500L4.500 6zM10.500 5.800a3.500 3.500 0 0 1 0 4.400M12.600 4a6 6 0 0 1 0 8M14.700 2.200a9 9 0 0 1 0 11.600" stroke-width="1.200"/></svg>
      <svg viewBox="0 0 18 16" class="i18 line"><rect x="1" y="3.500" width="13.500" height="9.500" rx="2.500" stroke-width="1.200"/><path d="M3 5.500h7v5.500H3z" fill="currentColor" stroke="none"/><path d="M16.300 6.500v3.500" stroke-width="1.800"/></svg>
      <div class="clock"><time>03:11</time><time>24/06/2024</time></div>
      <svg viewBox="0 0 16 18" class="i18 bell"><path fill="#f0f0f0" d="M7.500 1.500C3.500 1.500 2 4 2 7v3L.5 14h14.500L13.500 10V7c0-3-2-5.500-6-5.500zM5.500 15h4.400l-2.200 2.500z"/><path fill="none" stroke="#202430" stroke-width="1.200" d="M4 6h3.500l-3.500 5h3.500M8.500 7.500h2.500l-2.500 3H11"/><path fill="none" stroke="#f0f0f0" d="M12 1h3l-3 3.500h3.500"/></svg>
    </div>
    <div class="corner"></div>
  </div>
</div>
</body>
</html>
```
FILE: styles.css
```css
* { box-sizing: border-box; }
body { margin: 0; background: #1f1f1f; font-family: Lato, "Liberation Sans", sans-serif; font-variant-ligatures: none; }
button { border: 0; background: none; padding: 0; margin: 0; font: inherit; color: inherit; display: flex; align-items: center; }
a { text-decoration: none; color: inherit; }
svg { fill: currentColor; flex: none; display: block; }
.sprite { position: absolute; width: 0; height: 0; }
.line { fill: none; stroke: currentColor; }
.i10 { width: 10px; height: 10px; }
.i12 { width: 12px; height: 12px; }
.i14 { width: 14px; height: 14px; }
.i16 { width: 16px; height: 16px; }
.i18 { width: 18px; height: 18px; }
.i20 { width: 20px; height: 16px; }
.i24 { width: 24px; height: 24px; }
.i26 { width: 26px; height: 26px; }

.browser { height: 100vh; padding: 13px 2px 3px 9px; display: flex; flex-direction: column; overflow: hidden; }

/* Browser tab strip */
.tabstrip { height: 41px; background: #31191c; display: flex; align-items: flex-start; padding: 6px 17px 0 7px; font: 12px "Open Sans", sans-serif; color: #e8c9cd; }
.tab-search { width: 28px; height: 28px; border-radius: 9px; background: #513338; justify-content: center; margin-right: 6px; }
.btab { width: 236px; height: 28px; border-radius: 9px; background: #4f2128; display: flex; align-items: center; padding: 0 12px 0 7px; gap: 7px; margin-right: 6px; }
.btab-title { flex: 1; min-width: 0; white-space: nowrap; mask-image: linear-gradient(90deg, #000 88%, transparent 101%); }
.btab.active { height: 35px; padding-bottom: 6px; background: #533438; border-radius: 9px 9px 0 0; color: #f3e3e5; padding-left: 8px; gap: 6px; }
.newtab { height: 28px; margin-left: 8px; }
.winctl { margin-left: auto; height: 28px; display: flex; gap: 34px; color: #e6d8da; }

/* Browser toolbar */
.toolbar { height: 48px; background: #533438; border-bottom: 1px solid #6e5155; border-radius: 9px 9px 0 0; display: flex; align-items: center; padding: 0 14px; gap: 20px; color: #e9b9c0; box-shadow: 0 -9px 0 -2px #31191c; }
.toolbar .dim { color: #85656a; }
.omnibox { flex: 1; height: 34px; border-radius: 17px; background: #3a2023; display: flex; align-items: center; padding: 0 16px 0 5px; gap: 15px; color: #dcc3c6; }
.chip { height: 24px; border-radius: 12px; background: #533438; padding: 0 5px 0 4px; gap: 4px; font: 600 12px "Open Sans", sans-serif; color: #f5e6e8; }
.url { flex: 1; min-width: 0; border: 0; background: none; padding: 0; margin-left: -6px; font: 14px "Open Sans", sans-serif; color: #e8d9db; }
.actions { display: flex; align-items: center; gap: 18px; margin-left: -4px; }
.sep { width: 1px; height: 16px; background: #7a4f56; }
.avatar { width: 20px; height: 20px; border-radius: 10px; background: #ec407a; color: #fff; justify-content: center; font: 11px Roboto, sans-serif; }
.glyph { font: 700 8px Roboto, sans-serif; fill: #3a2023; }

/* Page area */
.viewport { flex: 1; min-height: 0; display: flex; background: #fefefe; }
.scroller { flex: 1; overflow: hidden; }
.scrollbar { width: 16px; background: #f1f1f1; display: flex; flex-direction: column; align-items: center; padding: 5px 0; }
.arrow { width: 8px; height: 5px; color: #505050; }
.arrow.up { color: #a3a3a3; }
.track { flex: 1; width: 100%; padding: 6px 1px; }
.thumb { height: 87%; background: #c1c1c1; }
.app { max-width: 1220px; margin: 0 auto; display: flex; }

/* Sidebar */
.sidebar { width: 203px; flex: none; background: #f7f7f7; border: solid #e3e3e3; border-width: 0 1px; color: #333; font-size: 13px; font-weight: 700; }
.logo { height: 60px; border-bottom: 1px solid #dedede; display: flex; align-items: center; justify-content: center; gap: 4px; padding-top: 12px; }
.logo-mark { width: 27px; height: 34px; }
.logo-text { display: flex; flex-direction: column; font: 600 19px/18px Inter, sans-serif; color: #333; }
.logo-text .blue { color: #0098c3; }
.nav { padding: 22px 20px 0; }
.group { padding-bottom: 6px; }
.group.open { padding-bottom: 13px; }
.section { width: 100%; display: flex; justify-content: space-between; align-items: center; padding-top: 6px; line-height: 20px; }
.caret { width: 10px; height: 6px; color: #e2e2e2; }
.section .caret { width: 11px; margin-right: 13px; }
.sub { height: 34px; display: flex; align-items: center; color: #8a8a8a; padding-left: 15px; white-space: nowrap; }
.sub span { margin-left: 8px; }
.sub.current { color: #0a0a0a; }
.ni { width: 18px; height: 18px; }
.ni.wide { width: 22px; margin: 0 -2px; }
.support { margin: 10px 20px 0; height: 120px; border: 1px solid #ddd; background: #fff; padding: 19px 20px; }
.support-tag { display: block; background: #ee5942; border-radius: 2px; color: #fff; font-size: 10px; line-height: 22px; text-align: center; white-space: nowrap; }

/* Main header */
.main { flex: 1; min-width: 0; }
.head { height: 60px; border-bottom: 1px solid #dedede; border-right: 1px solid #eee; padding: 0 20px 0 42px; display: flex; align-items: center; }
.head-lock { width: 22px; height: 25px; color: #cacde0; }
.head h1 { margin: 2px 0 0 3px; font-size: 21px; font-weight: 500; color: #4a4a4a; }
.head small { font-size: 13px; font-weight: 600; color: #8a8a8a; }
.head-menu { margin-left: auto; display: flex; gap: 18px; font-size: 13px; font-weight: 700; color: #555; }
.head-menu button { gap: 7px; }

.content { padding: 17px 43px 0 42px; }
.actionbar { display: flex; gap: 24px; }
.bgroup { display: flex; gap: 5px; }
.btn { height: 31px; border-radius: 2px; background: #8a8a8a; color: #fff; padding: 0 10px; gap: 9px; box-shadow: 0 2px 5px rgba(0, 0, 0, .2); }
.btn.cyan { background: #4dbbd5; }
.btn.red { background: #ee5942; }
.btn.pale { background: #d2ecf3; box-shadow: none; }
.ic-list { width: 28px; height: 15px; }
.i14.n { width: 12px; }
.i14.w { width: 17px; }
.i14.ww { width: 18px; }
.bc { width: 9px; height: 6px; }

.alert { margin-top: 13px; border: 1px solid #e6b74a; border-radius: 6px; background: #fff1d8; display: grid; grid-template-columns: 1fr 9fr 140px; padding: 13px 0 12px 13px; font-size: 14px; line-height: 20px; color: #222; }
.alert p { margin: 0; font-size: 13px; font-weight: 300; }
.alert b { font-size: 14px; font-weight: 400; color: #0a0a0a; }
.alert a { color: #0a0a0a; text-decoration: underline; }
.gold { color: #daa520; margin-top: 3px; }

.tabs { margin-top: 17px; border-bottom: 1px solid #dedede; display: flex; gap: 1px; height: 53px; }
.tabs a { height: 53px; padding: 9px 20px 0; display: flex; flex-direction: column; align-items: center; font-size: 14px; line-height: 16px; font-weight: 300; color: #8a8a8a; }
.tabs .on { color: #4a4a4a; font-weight: 700; border-bottom: 2px solid #4dbbd5; }
.ti { width: 19px; height: 15px; }

/* Tables */
.panels { display: grid; grid-template-columns: 1fr 1fr; gap: 30px; padding: 0 15px; margin-top: 16px; align-items: start; }
table { width: 100%; border-collapse: collapse; table-layout: fixed; font-size: 13px; font-weight: 300; color: #111; }
th { height: 40px; padding: 0 7px; text-align: left; font-size: 15px; font-weight: 700; color: #4f4f4f; }
tbody { border: solid #f0f0f0; border-width: 1px 0; }
td { height: 33px; padding: 0 7px; line-height: 18px; }
.mid th { height: 36px; padding-bottom: 2px; }
.blank td { height: 31px; }
.tall td { height: 36px; }
.col-key { width: 36%; }
.col-edit { width: 40px; }
.attrs th { height: 58px; }
.perm tbody td { padding-bottom: 3px; }
.perm .c { text-align: center; padding-left: 0; padding-right: 0; width: 82px; }
.perm a, .info a { color: #2e9cba; font-weight: 400; }
.e button { margin-left: auto; padding-bottom: 6px; }
.ed { width: 15px; height: 14px; color: #2e9cba; }
.perm input { width: 13px; height: 13px; margin: 0 0 4px; vertical-align: middle; }
.pill { display: inline-block; background: #ee5942; color: #fff; font-weight: 700; line-height: 22px; border-radius: 11px; padding: 0 7px; }

/* Taskbar */
.taskbar { height: 47px; flex: none; position: relative; border-top: 1px solid #3a3a3e; background: linear-gradient(90deg, #1c222c 0, #1c232e 250px, #13214f 300px, #101a55 370px, #101c55 510px, #212121 560px, #212121 1330px, #1c222e 100%); display: grid; grid-template-columns: 1fr auto 1fr; align-items: center; font-family: "Open Sans", sans-serif; color: #f0f0f0; }
.dock { grid-column: 2; display: flex; align-items: center; padding-left: 10px; }
.start { margin-right: 14px; }
.search { width: 223px; height: 34px; border-radius: 17px; background: rgba(255, 255, 255, .15); border-top: 1px solid rgba(255, 255, 255, .15); display: flex; align-items: center; padding: 0 12px; gap: 9px; }
.search input { flex: 1; min-width: 0; border: 0; background: none; padding: 0; font: 14px "Open Sans", sans-serif; color: #ddd; }
.search input::placeholder { color: #d2d2d2; }
.apps { display: flex; gap: 5px; padding-left: 4px; }
.apps button { width: 40px; height: 41px; border-radius: 4px; justify-content: center; position: relative; padding-bottom: 1px; }
.run::after { content: ""; position: absolute; bottom: 1px; left: 17px; width: 6px; height: 3px; border-radius: 2px; background: #9a9a9a; }
.apps .focus { background: #2f2f2f; }
.focus::after { left: 12px; width: 16px; background: #4cc2ff; }
.badge { position: absolute; right: 3px; top: 3px; width: 16px; height: 16px; border-radius: 8px; background: #4cc2ff; color: #16324a; font-size: 11px; line-height: 16px; text-align: center; }
.kali { font: 700 5px "Liberation Sans", sans-serif; fill: #ddd; }
.tray { grid-column: 3; justify-self: end; display: flex; align-items: center; gap: 7px; padding-right: 17px; }
.wifi { margin-left: 11px; }
.clock { display: flex; flex-direction: column; align-items: flex-end; font-size: 12px; line-height: 16px; margin-left: 8px; }
.corner { position: absolute; right: -2px; bottom: -3px; width: 54px; height: 9px; background: #232323; border: solid #3a3a3a; border-width: 1px 0 0 1px; border-radius: 8px 0 0 0; }
```
